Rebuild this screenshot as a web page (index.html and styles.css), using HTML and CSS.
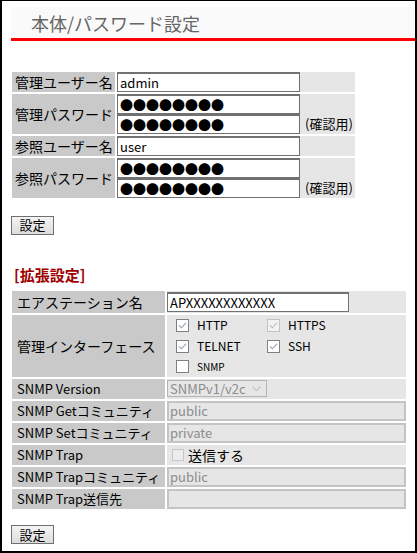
FILE: index.html
```html
<!DOCTYPE html>
<html>
	<head>
		<meta charset="UTF-8">
		<title>本体/パスワード設定</title>
		<link rel="stylesheet" href="styles.css">
	</head>
	<body>
		<div class="page">
			<div class="title">本体/パスワード設定</div>

			<table class="form main">
				<tr>
					<th>管理ユーザー名</th>
					<td><input type="text" class="txt" value="admin"></td>
				</tr>
				<tr>
					<th>管理パスワード</th>
					<td>
						<div class="pw-box">
							<div class="pw-list">
								<input type="text" class="txt pw" value="●●●●●●●●">
								<input type="text" class="txt pw" value="●●●●●●●●">
							</div>
							<span class="note">(確認用)</span>
						</div>
					</td>
				</tr>
				<tr>
					<th>参照ユーザー名</th>
					<td><input type="text" class="txt" value="user"></td>
				</tr>
				<tr>
					<th>参照パスワード</th>
					<td>
						<div class="pw-box">
							<div class="pw-list">
								<input type="text" class="txt pw" value="●●●●●●●●">
								<input type="text" class="txt pw" value="●●●●●●●●">
							</div>
							<span class="note">(確認用)</span>
						</div>
					</td>
				</tr>
			</table>
			<div class="btns"><button class="btn">設定</button></div>

			<div class="sub">[拡張設定]</div>
			<table class="form ext">
				<tr>
					<th class="jp">エアステーション名</th>
					<td class="pad"><input type="text" class="txt name" value="APXXXXXXXXXXXX"></td>
				</tr>
				<tr>
					<th class="jp">管理インターフェース</th>
					<td class="opts-cell">
						<div class="opts">
							<label class="opt">
								<svg class="cb" width="13" height="13" viewBox="0 0 13 13"><rect x="0.5" y="0.5" width="12" height="12" fill="#fff" stroke="#808080"/><path d="M3 6.4 L5.3 8.8 L10 3.8" fill="none" stroke="#8fa0b3" stroke-width="1.1"/></svg>
								HTTP
							</label>
							<label class="opt">
								<svg class="cb" width="13" height="13" viewBox="0 0 13 13"><rect x="0.5" y="0.5" width="12" height="12" fill="#f2f2f2" stroke="#c2c2c2"/><path d="M3 6.4 L5.3 8.8 L10 3.8" fill="none" stroke="#b9b9b9" stroke-width="1.1"/></svg>
								HTTPS
							</label>
							<label class="opt">
								<svg class="cb" width="13" height="13" viewBox="0 0 13 13"><rect x="0.5" y="0.5" width="12" height="12" fill="#fff" stroke="#808080"/><path d="M3 6.4 L5.3 8.8 L10 3.8" fill="none" stroke="#8fa0b3" stroke-width="1.1"/></svg>
								TELNET
							</label>
							<label class="opt">
								<svg class="cb" width="13" height="13" viewBox="0 0 13 13"><rect x="0.5" y="0.5" width="12" height="12" fill="#fff" stroke="#808080"/><path d="M3 6.4 L5.3 8.8 L10 3.8" fill="none" stroke="#8fa0b3" stroke-width="1.1"/></svg>
								SSH
							</label>
							<label class="opt small">
								<svg class="cb" width="13" height="13" viewBox="0 0 13 13"><rect x="0.5" y="0.5" width="12" height="12" fill="#fff" stroke="#808080"/></svg>
								SNMP
							</label>
						</div>
					</td>
				</tr>
				<tr>
					<th>SNMP Version</th>
					<td>
						<span class="sel">
							<select disabled><option>SNMPv1/v2c</option></select>
							<svg class="arrow" width="9" height="6" viewBox="0 0 9 6"><path d="M0.5 0.5 L4.5 4.8 L8.5 0.5" fill="none" stroke="#b0b0b0"/></svg>
						</span>
					</td>
				</tr>
				<tr>
					<th>SNMP Getコミュニティ</th>
					<td><input type="text" class="txt off" value="public" disabled></td>
				</tr>
				<tr>
					<th>SNMP Setコミュニティ</th>
					<td><input type="text" class="txt off" value="private" disabled></td>
				</tr>
				<tr>
					<th>SNMP Trap</th>
					<td>
						<label class="trap">
							<svg class="cb" width="12" height="12" viewBox="0 0 12 12"><rect x="0.5" y="0.5" width="11" height="11" fill="#ececec" stroke="#c6c6c6"/></svg>
							送信する
						</label>
					</td>
				</tr>
				<tr>
					<th>SNMP Trapコミュニティ</th>
					<td><input type="text" class="txt off" value="public" disabled></td>
				</tr>
				<tr>
					<th>SNMP Trap送信先</th>
					<td><input type="text" class="txt off" value="" disabled></td>
				</tr>
			</table>
			<div class="btns"><button class="btn">設定</button></div>
		</div>
	</body>
</html>
```

FILE: styles.css
```css
*{
	margin:0;
	padding:0;
	box-sizing: border-box;
}
body{
	background: #fff;
	font-family: "Noto Sans CJK JP", sans-serif;
	font-size: 13px;
	color: #000;
}
.page{
	width: 417px;
	height: 553px;
	border: 2px solid #000;
	border-top-width: 1px;
	padding: 6px 0 0 8px;
}
.title{
	margin-left: 1px;
	height: 34px;
	line-height: 33px;
	padding-left: 20px;
	background: #fafafa;
	border-bottom: 3px solid #ff0000;
	font-size: 18px;
	color: #666;
}
.form{
	border-collapse: separate;
	border-spacing: 2px;
	table-layout: fixed;
}
.main{
	margin-top: 29px;
	width: 347px;
}
.form th{
	background: #c9c9c9;
	font-weight: normal;
	text-align: left;
	white-space: nowrap;
	vertical-align: middle;
	font-size: 14px;
	line-height: 18px;
	overflow: hidden;
}
.form td{
	background: #e6e6e6;
	vertical-align: middle;
	padding: 0;
}
.main th{
	width: 103px;
	padding-left: 3px;
}
.main td{
	width: 238px;
}
.ext{
	width: 398px;
}
.ext th{
	width: 153px;
	padding-left: 5px;
	height: 20px;
	font-size: 13px;
	line-height: 16px;
}
.ext th.jp{
	font-size: 14px;
}
.ext td{
	width: 239px;
	height: 20px;
}
.ext td.pad{
	padding: 1px 0;
}
.ext td.opts-cell{
	height: 62px;
}
.txt{
	display: block;
	height: 20px;
	width: 183px;
	border: 1px solid #717171;
	border-top-width: 2px;
	background: #fff;
	font-family: "Noto Sans CJK JP", sans-serif;
	font-size: 13px;
	padding: 0 2px;
	outline: none;
	color: #000;
}
.pw{
	font-size: 13px;
}
.pw-box{
	display: flex;
	align-items: flex-end;
}
.note{
	line-height: 20px;
	margin-left: 5px;
	font-size: 13px;
}
.txt.name{
	width: 182px;
}
.txt.off{
	width: 239px;
	background: #e6e6e6;
	border: 2px solid #c4c4c4;
	color: #8c8c8c;
	padding: 0 1px;
}
.btns{
	margin-top: 15px;
	margin-left: 1px;
}
.btn{
	width: 43px;
	height: 19px;
	border: 1px solid #707070;
	background: linear-gradient(#f4f4f4, #dcdcdc);
	font-family: "Noto Sans CJK JP", sans-serif;
	font-size: 13px;
	line-height: 16px;
	color: #000;
}
.sub{
	margin-top: 30px;
	margin-bottom: 4px;
	padding-left: 4px;
	font-size: 15px;
	line-height: 20px;
	font-weight: bold;
	color: #a00000;
}
.ext + .btns{
	margin-top: 14px;
}
.opts{
	display: grid;
	grid-template-columns: 91px auto;
	grid-template-rows: 21px 21px 20px;
	padding-left: 9px;
}
.opt{
	display: flex;
	align-items: center;
	gap: 8px;
	font-size: 12px;
	line-height: 14px;
}
.opt.small{
	font-size: 10px;
}
.cb{
	display: block;
	flex: none;
}
.sel{
	position: relative;
	display: block;
	width: 100px;
	height: 17px;
}
.sel select{
	appearance: none;
	display: block;
	width: 100px;
	height: 17px;
	border: 1px solid #b4b4b4;
	background: #e6e6e6;
	color: #8c8c8c;
	font-family: "Noto Sans CJK JP", sans-serif;
	font-size: 13px;
	line-height: 15px;
	padding: 0 2px;
	opacity: 1;
}
.arrow{
	position: absolute;
	right: 6px;
	top: 6px;
}
.trap{
	display: flex;
	align-items: center;
	gap: 4px;
	padding-left: 5px;
	font-size: 14px;
	line-height: 18px;
}
```
